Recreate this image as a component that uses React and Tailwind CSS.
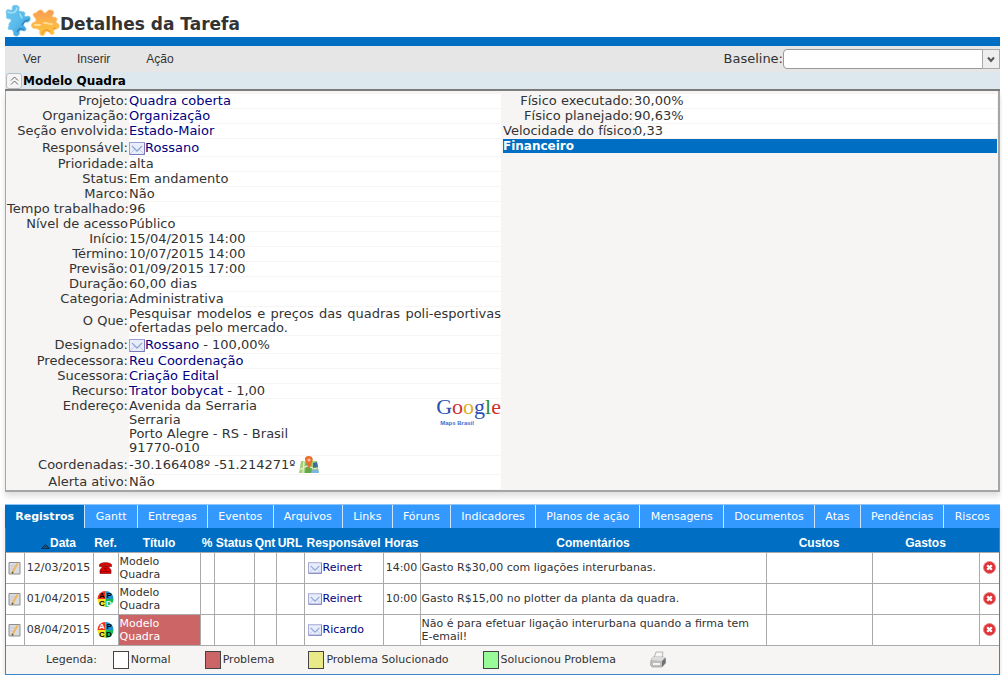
import React, { useState } from 'react'

const details = [
  { label: 'Projeto:', value: 'Quadra coberta', link: true },
  { label: 'Organização:', value: 'Organização', link: true },
  { label: 'Seção envolvida:', value: 'Estado-Maior', link: true },
  { label: 'Responsável:', value: 'Rossano', link: true, mail: true },
  { label: 'Prioridade:', value: 'alta' },
  { label: 'Status:', value: 'Em andamento' },
  { label: 'Marco:', value: 'Não' },
  { label: 'Tempo trabalhado:', value: '96' },
  { label: 'Nível de acesso', value: 'Público' },
  { label: 'Início:', value: '15/04/2015 14:00' },
  { label: 'Término:', value: '10/07/2015 14:00' },
  { label: 'Previsão:', value: '01/09/2015 17:00' },
  { label: 'Duração:', value: '60,00 dias' },
  { label: 'Categoria:', value: 'Administrativa' },
  { label: 'O Que:', value: 'Pesquisar modelos e preços das quadras poli-esportivas ofertadas pelo mercado.' },
  { label: 'Designado:', value: 'Rossano', link: true, mail: true, extra: ' - 100,00%' },
  { label: 'Predecessora:', value: 'Reu Coordenação', link: true },
  { label: 'Sucessora:', value: 'Criação Edital', link: true },
  { label: 'Recurso:', value: 'Trator bobycat', link: true, extra: ' - 1,00' },
  { label: 'Endereço:', address: ['Avenida da Serraria', 'Serraria', 'Porto Alegre - RS - Brasil', '91770-010'] },
  { label: 'Coordenadas:', value: '-30.166408º -51.214271º', map: true },
  { label: 'Alerta ativo:', value: 'Não' },
]

const progress = [
  { label: 'Físico executado:', value: '30,00%' },
  { label: 'Físico planejado:', value: '90,63%' },
  { label: 'Velocidade do físico:', value: '0,33' },
]

const tabs = [
  'Registros', 'Gantt', 'Entregas', 'Eventos', 'Arquivos', 'Links', 'Fóruns',
  'Indicadores', 'Planos de ação', 'Mensagens', 'Documentos', 'Atas', 'Pendências', 'Riscos',
]

const logs = [
  { date: '12/03/2015', ref: 'phone', user: 'Reinert', hours: '14:00', text: 'Gasto R$30,00 com ligações interurbanas.' },
  { date: '01/04/2015', ref: 'do', user: 'Reinert', hours: '10:00', text: 'Gasto R$15,00 no plotter da planta da quadra.' },
  { date: '08/04/2015', ref: 'act', user: 'Ricardo', hours: '', text: 'Não é para efetuar ligação interurbana quando a firma tem E-email!', problem: true },
]

function PuzzleIcon() {
  return (
    <svg width="55" height="36" viewBox="0 0 55 36" aria-hidden="true">
      <defs>
        <linearGradient id="blue" x1="0" y1="0" x2="1" y2="1">
          <stop offset="0" stopColor="#6cc4ee" />
          <stop offset="0.5" stopColor="#5bbceb" />
          <stop offset="1" stopColor="#2f95d0" />
        </linearGradient>
        <linearGradient id="orange" x1="0" y1="0" x2="0" y2="1">
          <stop offset="0" stopColor="#f79b55" />
          <stop offset="0.5" stopColor="#fdb54a" />
          <stop offset="1" stopColor="#fbc62f" />
        </linearGradient>
      </defs>
      <path
        d="M2 9 C4 8 6 10 7 9 C8 7 6 5 9 4.5 C13 3.5 15 6 14 8 C13 11 16 10 19 11 C21 12 19 14 20 15.5 C22 16 23 14 25 16 C26 19 24 22 21 21 C18 21 18 24 20 26 C22 28 21 30 19 30 C16 29 14 29 14.5 32 C14 36 9 36 8.5 33 C9 30 7 28 4 28.5 C2 28 4 26 4 24 C3 22 7 21 6 18.5 C4 17 1.5 19 1.5 16 C2 13 0 11 2 9 Z"
        fill="url(#blue)"
        stroke="#7ccbec"
        strokeWidth="0.8"
      />
      <path d="M3 11 C7 13 11 12 12 7 M15 13 L17 17" stroke="#a4dff8" strokeWidth="1.5" strokeLinecap="round" fill="none" />
      <path d="M19 29 C16 27 14 27 12 31 M24 19 L20 20 L17 24" stroke="#2b84c4" strokeWidth="1.3" fill="none" />
      <path
        d="M29 12 C32 13 32 9 36 9 C38 9 38 12 40 12 C43 12 41 9 45 9 C50 9 49 13 47 15 C47 17 51 15 52 18 C52 20 50 21 52 22 C55 23 55 28 51 28 C49 28 48 30 49 32 C48 35 45 33 44 31 C42 29 40 31 39 34 C36 36 34 33 35 30 C34 27 31 28 28 27 C25 25 27 21 30 21 C33 19 29 16 28 14 Z"
        fill="url(#orange)"
        stroke="#fbc06b"
        strokeWidth="0.8"
      />
      <path d="M30 24 L35 24 M39 22 C42 21 44 24 47 23" stroke="#ffdf98" strokeWidth="1.8" strokeLinecap="round" fill="none" />
      <path d="M37 33 C38 29 42 27 45 31 M51 27 L48 28" stroke="#e8943a" strokeWidth="1.2" fill="none" />
    </svg>
  )
}

function MailIcon({ className = '' }) {
  return (
    <svg className={`inline-block shrink-0 ${className}`} viewBox="0 0 16 13" aria-hidden="true">
      <rect x="0.5" y="0.5" width="15" height="12" fill="#e9edfa" stroke="#9a9fd3" />
      <path d="M1 12 L6 7 M15 12 L10 7" stroke="#c6cdec" />
      <path d="M3 4 L8 9 L13 4" fill="none" stroke="#8fa6d8" strokeWidth="1.3" />
      <path d="M15.5 1 V12.5 H1" fill="none" stroke="#777bba" />
    </svg>
  )
}

function MapIcon() {
  return (
    <svg className="ml-1 inline-block" width="20" height="18" viewBox="0 0 20 18" aria-hidden="true">
      <path d="M2 5 H18 L20 17 H0 Z" fill="#a5d077" />
      <path d="M7 5 H12 L13 17 H6 Z" fill="#62a64e" />
      <path d="M0 14 L8 10 L20 14 M5 5 L4 17" stroke="#e5edc8" strokeWidth="1.3" fill="none" />
      <path d="M14 7 L18 6 L19 11 L14 12 Z" fill="#3f6f9c" />
      <path d="M13 14 L19 13 L20 17 H12 Z" fill="#7fb4e0" />
      <path d="M10 13 L7 6 C4 1 8 0 10 0 C13 0 15 3 13 6 Z" fill="#ed6d2e" />
      <circle cx="10" cy="4" r="1.6" fill="#ffc09c" />
    </svg>
  )
}

function EditIcon() {
  return (
    <svg width="13" height="14" viewBox="0 0 13 14" aria-hidden="true">
      <path d="M1 1.5 H12 V13 H1 Z" fill="#d9dbe0" stroke="#8e8e8e" />
      <path d="M2.5 5 H8 M2.5 8 H7 M2.5 11 H5" stroke="#c6c6cc" />
      <path d="M4.5 11.5 L9.5 2.5" stroke="#eeb75c" strokeWidth="2" />
      <path d="M4 12.5 L5 11" stroke="#6d542b" strokeWidth="1.4" />
    </svg>
  )
}

function PhoneIcon() {
  return (
    <svg width="13" height="12" viewBox="0 0 13 12" aria-hidden="true">
      <path d="M0.5 4.5 V2.5 C2 0 11 0 12.5 2.5 V4.5 H9.5 V3.5 H3.5 V4.5 Z" fill="#dd0000" stroke="#7c0000" strokeWidth="0.6" />
      <path d="M4 4 H9 L12 8 V11.5 H1 V8 Z" fill="#dd0000" stroke="#7c0000" strokeWidth="0.6" />
      <path d="M1 9.5 H12" stroke="#a00000" />
      <circle cx="6.5" cy="7" r="1.3" fill="#a00000" />
    </svg>
  )
}

// Act / Plan / Check / Do wheel, the active quarter gets a light letter
function CycleIcon({ active }) {
  const color = (key) => (active === key ? '#ffffff' : '#000000')
  return (
    <svg width="17" height="18" viewBox="0 0 17 18" fontFamily="Liberation Sans, sans-serif" fontWeight="700" fontSize="8" aria-hidden="true">
      <path d="M8.5 9 V1 A8 8 0 0 0 0.5 9 Z" fill="#f0301a" />
      <path d="M8.5 9 V1 A8 8 0 0 1 16.5 9 Z" fill="#1e91d1" />
      <path d="M8.5 9 H0.5 A8 8 0 0 0 8.5 17 Z" fill="#f8e424" />
      <path d="M8.5 9 H16.5 A8 8 0 0 1 8.5 17 Z" fill="#12b955" />
      <text x="2" y="8" fill={color('act')}>A</text>
      <text x="9.5" y="8" fill="#000000">P</text>
      <text x="2" y="16" fill="#000000">C</text>
      <text x="9" y="16" fill={color('do')}>D</text>
    </svg>
  )
}

function RemoveIcon() {
  return (
    <svg width="13" height="13" viewBox="0 0 13 13" aria-hidden="true">
      <circle cx="6.5" cy="6.5" r="6" fill="#df3036" stroke="#ea8586" />
      <path d="M4.2 4.2 L8.8 8.8 M8.8 4.2 L4.2 8.8" stroke="#fff" strokeWidth="2.3" />
    </svg>
  )
}

function PrinterIcon() {
  return (
    <svg width="16" height="17" viewBox="0 0 16 17" aria-hidden="true">
      <path d="M4 7 L6 1 L13 1 L12 7 Z" fill="#f5f5f5" stroke="#b5b5b5" />
      <path d="M1 9 L3 6 H13 L15.5 7 V12 L12 16 H2 L0.5 14 Z" fill="#bdbdbd" stroke="#9d9d9d" strokeWidth="0.7" />
      <path d="M1 9 L3 6 H15 L12 10 Z" fill="#dcdcdc" />
      <path d="M12 10 L15.5 7 V12 L12 16 Z" fill="#717171" />
      <path d="M3 12 H10 V14 H3 Z" fill="#f4f4f4" />
    </svg>
  )
}

function DetailValue({ row }) {
  if (row.address) {
    return (
      <div className="flex justify-between">
        <address className="not-italic">
          {row.address.map((line) => <div key={line}>{line}</div>)}
        </address>
        <a href="#mapa" className="flex flex-col font-['Liberation_Serif',serif] text-[22px] leading-4">
          <span>
            <span className="text-[#2b50b5]">G</span>
            <span className="text-[#cf2f2b]">o</span>
            <span className="text-[#dcae1d]">o</span>
            <span className="text-[#2b50b5]">g</span>
            <span className="text-[#2c8a35]">l</span>
            <span className="text-[#cf2f2b]">e</span>
          </span>
          <span className="pt-1 pl-1 font-['Liberation_Sans',sans-serif] text-[6px] leading-2 font-bold text-[#3f6fd0]">Maps Brasil</span>
        </a>
      </div>
    )
  }
  return (
    <>
      {row.mail && <MailIcon className="mt-px h-[13px] w-4 align-top" />}
      {row.link ? <a href="#detalhe" className="text-[#000080]">{row.value}</a> : row.value}
      {row.extra}
      {row.map && <MapIcon />}
    </>
  )
}

function Swatch({ color, label }) {
  return (
    <span className="flex items-center gap-0.5">
      <span className={`h-[18px] w-4 border border-[#444] ${color}`}></span>
      {label}
    </span>
  )
}

export default function App() {
  const [activeTab, setActiveTab] = useState('Registros')
  const [open, setOpen] = useState(true)

  return (
    <div className="bg-white pr-0.5 pl-[5px] font-['DejaVu_Sans',Verdana,sans-serif] text-[13px] leading-[14px] text-[#333]">
      {/* Title */}
      <header className="flex h-[37px] items-center">
        <PuzzleIcon />
        <h1 className="pt-2.5 text-[17px] leading-6 font-bold">Detalhes da Tarefa</h1>
      </header>
      <div className="h-[9px] bg-[#006fc3]"></div>

      {/* Menu */}
      <div className="flex h-[26px] items-center justify-between bg-[#e6e6e6]">
        <nav className="flex gap-9 pl-[18px] font-['Liberation_Sans',Arial,sans-serif] text-[12px]">
          <button type="button">Ver</button>
          <button type="button">Inserir</button>
          <button type="button">Ação</button>
        </nav>
        <div className="flex items-center">
          <label htmlFor="baseline">Baseline:</label>
          <div className="relative flex">
            <select id="baseline" className="h-5 w-[217px] appearance-none rounded-[4px] border border-[#999] bg-white">
              <option value=""></option>
            </select>
            <span className="pointer-events-none absolute top-0 right-0 flex h-5 w-[18px] items-center justify-center border border-[#aaa] bg-[#eee]">
              <svg width="8" height="7" viewBox="0 0 8 7" aria-hidden="true">
                <path d="M1 1.5 L4 5 L7 1.5" fill="none" stroke="#555" strokeWidth="2" />
              </svg>
            </span>
          </div>
        </div>
      </div>

      {/* Task name */}
      <div className="flex h-[19px] items-center border-b-2 border-[#777] bg-[#dce8ee]">
        <button
          type="button"
          aria-label="Recolher"
          onClick={() => setOpen(!open)}
          className="ml-px flex size-4 items-center justify-center rounded-[3px] border border-[#bbb] bg-[#f4f4f4]"
        >
          <svg width="9" height="9" viewBox="0 0 9 9" fill="none" stroke="#666" aria-hidden="true">
            <path d="M1 4.5 L4.5 1 L8 4.5 M1 8.5 L4.5 5 L8 8.5" />
          </svg>
        </button>
        <h2 className="pl-px text-[12px] font-bold text-black">Modelo Quadra</h2>
      </div>

      {/* Details */}
      {open && (
        <div className="flex items-start border-r-2 border-b-2 border-l border-[#a5a5a5] bg-[#f6f5f4] pt-0.5 shadow-[0_4px_6px_#ddd]">
          <table className="w-1/2 table-fixed border-separate border-spacing-px">
            <colgroup>
              <col className="w-[121px]" />
              <col />
            </colgroup>
            <tbody>
              {details.map((row) => (
                <tr key={row.label} className={row.mail || row.map ? 'h-[17px]' : 'h-3.5'}>
                  <th className={`p-0 text-right font-normal whitespace-nowrap ${row.address ? 'align-top' : 'align-middle'}`}>{row.label}</th>
                  <td className="bg-white p-0 text-justify align-middle"><DetailValue row={row} /></td>
                </tr>
              ))}
            </tbody>
          </table>
          <table className="w-1/2 table-fixed border-separate border-spacing-px">
            <colgroup>
              <col className="w-[130px]" />
              <col />
            </colgroup>
            <tbody>
              {progress.map((row) => (
                <tr key={row.label}>
                  <th className="p-0 text-right font-normal whitespace-nowrap">{row.label}</th>
                  <td className="bg-white p-0">{row.value}</td>
                </tr>
              ))}
              <tr>
                <th colSpan="2" className="bg-[#006fc3] p-0 text-left text-[12px] font-bold text-white">Financeiro</th>
              </tr>
            </tbody>
          </table>
        </div>
      )}

      {/* Tabs */}
      <div className="relative mt-3 text-[11px] shadow-[0_4px_6px_#ddd]">
        <div role="tablist" className="flex h-6 overflow-hidden border-t border-[#8dc6ff] bg-[#3399ff]">
          {tabs.map((tab) => (
            <button
              key={tab}
              type="button"
              role="tab"
              aria-selected={tab === activeTab}
              onClick={() => setActiveTab(tab)}
              className={`grow border-r border-[#cfe6ff] whitespace-nowrap text-white last:border-r-0 ${tab === activeTab ? 'bg-[#006fc3] font-bold' : 'bg-[#3399ff]'}`}
            >
              {tab}
            </button>
          ))}
        </div>

        {/* Logs */}
        <div className="border-r border-b border-l border-[#3a86c8] bg-[#f6f5f4]">
          <table className="w-full table-fixed border-collapse leading-[13px]">
            <colgroup>
              <col className="w-[18px]" />
              <col className="w-[69px]" />
              <col className="w-[25px]" />
              <col className="w-[82px]" />
              <col className="w-[14px]" />
              <col className="w-[40px]" />
              <col className="w-[22px]" />
              <col className="w-[28px]" />
              <col className="w-[79px]" />
              <col className="w-[37px]" />
              <col />
              <col className="w-[106px]" />
              <col className="w-[107px]" />
              <col className="w-[20px]" />
            </colgroup>
            <thead>
              <tr className="h-6 bg-[#006fc3] font-['Liberation_Sans',Arial,sans-serif] text-[12px] whitespace-nowrap text-white *:p-0 *:pt-2">
                <th></th>
                <th>
                  <span className="flex items-end justify-center">
                    <svg width="9" height="7" viewBox="0 0 9 7" aria-hidden="true">
                      <path d="M0.5 5.5 L4.5 1.5 L8.5 5.5 Z" fill="#174f7c" stroke="#062f50" />
                    </svg>
                    Data
                  </span>
                </th>
                <th>Ref.</th>
                <th>Título</th>
                <th>%</th>
                <th>Status</th>
                <th>Qnt</th>
                <th>URL</th>
                <th>Responsável</th>
                <th>Horas</th>
                <th>Comentários</th>
                <th>Custos</th>
                <th>Gastos</th>
                <th></th>
              </tr>
            </thead>
            <tbody>
              {logs.map((log) => (
                <tr key={log.date} className="h-[31px] bg-white *:border *:border-[#aaa] *:p-0 *:first:border-l-0 *:last:border-r-0">
                  <td>
                    <button type="button" aria-label="Editar" className="flex w-full justify-center"><EditIcon /></button>
                  </td>
                  <td className="text-center whitespace-nowrap">{log.date}</td>
                  <td>
                    <span className="flex justify-center">
                      {log.ref === 'phone' ? <PhoneIcon /> : <CycleIcon active={log.ref} />}
                    </span>
                  </td>
                  <td className={log.problem ? 'bg-[#cc6666] text-white' : ''}>
                    <div className="w-14 pl-px">Modelo Quadra</div>
                  </td>
                  <td></td>
                  <td></td>
                  <td></td>
                  <td></td>
                  <td>
                    <a href="#usuario" className="flex items-center gap-px pl-[3px] text-[#000080]">
                      <MailIcon className="h-3 w-3.5" />
                      {log.user}
                    </a>
                  </td>
                  <td className="text-center">{log.hours}</td>
                  <td><div className="pr-3 pl-px">{log.text}</div></td>
                  <td></td>
                  <td></td>
                  <td>
                    <button type="button" aria-label="Excluir" className="flex w-full justify-center"><RemoveIcon /></button>
                  </td>
                </tr>
              ))}
            </tbody>
          </table>

          {/* Legend */}
          <div className="flex h-7 items-center pl-10">
            <span>Legenda:</span>
            <div className="flex items-center gap-[34px] pl-4">
              <Swatch color="bg-white" label="Normal" />
              <Swatch color="bg-[#cc6666]" label="Problema" />
              <Swatch color="bg-[#e9e987]" label="Problema Solucionado" />
              <Swatch color="bg-[#98fa98]" label="Solucionou Problema" />
              <button type="button" aria-label="Imprimir"><PrinterIcon /></button>
            </div>
          </div>
        </div>
      </div>
    </div>
  )
}
